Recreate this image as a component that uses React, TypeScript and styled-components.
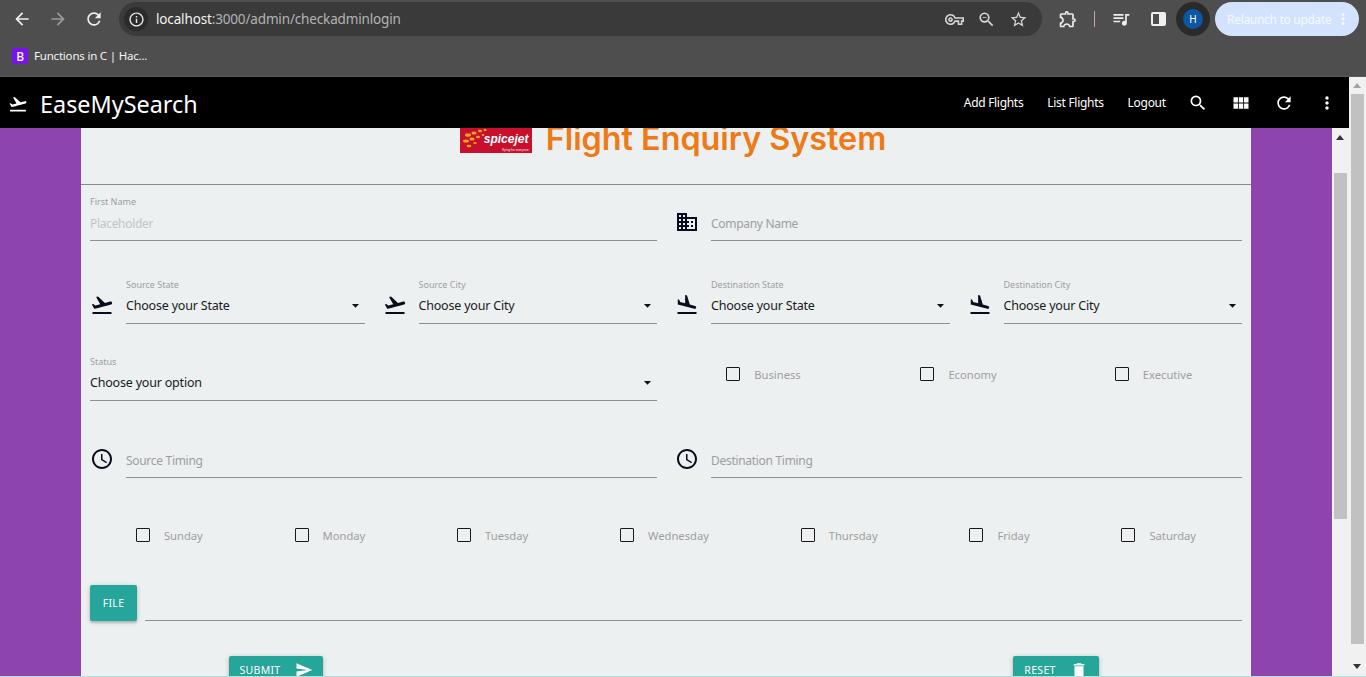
import React from 'react'
import styled, { createGlobalStyle } from 'styled-components'
import {
  MdAccessTime,
  MdArrowBack,
  MdArrowDropDown,
  MdArrowForward,
  MdBusiness,
  MdDelete,
  MdFlightLand,
  MdFlightTakeoff,
  MdInfoOutline,
  MdMoreVert,
  MdOutlineExtension,
  MdOutlineVpnKey,
  MdQueueMusic,
  MdRefresh,
  MdSearch,
  MdSend,
  MdStarBorder,
  MdViewModule,
  MdZoomOut,
} from 'react-icons/md'

const GlobalStyle = createGlobalStyle`
  html, body {
    margin: 0;
    padding: 0;
    overflow: hidden;
    background: #8e44ad;
    font-family: "Noto Sans", "Open Sans", sans-serif;
  }
  * { box-sizing: border-box; }
`

const Root = styled.div`
  width: 1366px;
  height: 677px;
  display: flex;
  flex-direction: column;
  overflow: hidden;
`

/* browser chrome */
const Chrome = styled.header`
  height: 77px;
  flex: none;
  background: #4e4e4e;
  border-bottom: 1px solid #5c5c5c;
  color: #e8e8e8;
`

const Toolbar = styled.div`
  height: 38px;
  display: flex;
  align-items: center;
  padding: 0 4px 0 12px;
`

const NavButton = styled.span<{ $dim?: boolean }>`
  width: 20px;
  display: flex;
  margin-right: 16px;
  font-size: 20px;
  color: ${p => (p.$dim ? '#9a9a9a' : '#f0f0f0')};
`

const Omnibox = styled.div`
  width: 923px;
  height: 34px;
  margin-left: -1px;
  border-radius: 17px;
  background: #3a3a3a;
  display: flex;
  align-items: center;
  padding: 0 14px 0 5px;
`

const SiteInfo = styled.span`
  width: 24px;
  height: 24px;
  border-radius: 50%;
  background: #2b2b2b;
  display: flex;
  align-items: center;
  justify-content: center;
  font-size: 17px;
  margin-right: 8px;
`

const Url = styled.span`
  flex: 1;
  font-size: 13.5px;
  letter-spacing: -0.15px;
  color: #b4b4b4;
  b {
    font-weight: 400;
    color: #f2f2f2;
  }
`

const OmniIcon = styled.span`
  display: flex;
  font-size: 19px;
  margin-left: 13px;
  color: #d6d6d6;
`

const ToolIcon = styled.span<{ $w: number }>`
  display: flex;
  justify-content: center;
  width: ${p => p.$w}px;
  font-size: 20px;
  color: #ededed;
`

const Divider = styled.span`
  width: 1px;
  height: 16px;
  background: #c9a3a8;
`

const SidePanel = styled.span`
  width: 15px;
  height: 14px;
  border: 2px solid #f0f0f0;
  border-radius: 2px;
  background: linear-gradient(90deg, transparent 50%, #f0f0f0 50%);
`

const AvatarRing = styled.span`
  width: 34px;
  height: 34px;
  border-radius: 50%;
  background: #2a2a2a;
  display: flex;
  align-items: center;
  justify-content: center;
`

const Avatar = styled.span`
  width: 20px;
  height: 20px;
  border-radius: 50%;
  background: #0b57a4;
  color: #fff;
  font-size: 10px;
  display: flex;
  align-items: center;
  justify-content: center;
`

const Relaunch = styled.span`
  width: 144px;
  height: 34px;
  margin-left: 5px;
  border-radius: 17px;
  background: #d3e3fd;
  color: #f6f9ff;
  font-size: 12px;
  letter-spacing: -0.3px;
  white-space: nowrap;
  display: flex;
  align-items: center;
  justify-content: space-between;
  padding: 0 7px 0 12px;
  svg { font-size: 18px; }
`

const Bookmarks = styled.div`
  height: 36px;
  display: flex;
  align-items: center;
  padding: 0 0 0 12px;
  font-size: 11.5px;
  letter-spacing: -0.2px;
  color: #f4f4f4;
`

const BookmarkName = styled.span`
  margin-top: -2px;
`

const Favicon = styled.span`
  width: 16px;
  height: 16px;
  border-radius: 3px;
  background: #7a11f0;
  color: #fff;
  font-size: 12px;
  font-weight: 500;
  display: flex;
  align-items: center;
  justify-content: center;
  margin-right: 6px;
`

/* page */
const Viewport = styled.div`
  flex: 1;
  min-height: 0;
  display: flex;
`

const Page = styled.div`
  flex: 1;
  display: flex;
  flex-direction: column;
  min-width: 0;
`

const Navbar = styled.nav`
  height: 51px;
  flex: none;
  background: #000;
  color: #fff;
  display: flex;
  align-items: center;
  padding-left: 8px;
`

const Brand = styled.span`
  display: flex;
  align-items: center;
  flex: 1;
  padding-top: 2px;
  font-size: 23.4px;
  svg {
    font-size: 20px;
    margin-right: 12px;
  }
`

const NavLink = styled.a`
  font-size: 12px;
  letter-spacing: -0.3px;
  padding: 0 12px;
  &:last-of-type { margin-right: -1.5px; }
`

const NavIcon = styled.span`
  width: 43.2px;
  display: flex;
  justify-content: center;
  font-size: 20px;
`

const Body = styled.div`
  flex: 1;
  min-height: 0;
  display: flex;
  background: #8e44ad;
`

const Card = styled.main`
  width: 1170px;
  margin: 0 81px;
  flex: none;
  background: #ecf0f1;
  overflow: hidden;
`

const TitleRow = styled.div`
  height: 57px;
  overflow: hidden;
  display: flex;
  align-items: flex-end;
  justify-content: center;
  gap: 14px;
  padding: 0 0 27px 14px;
  border-bottom: 1px solid #8a8a8a;
`

const Logo = styled.div`
  position: relative;
  flex: none;
  width: 72px;
  height: 36px;
  margin-bottom: 4px;
  background: #c8102e;
  color: #fff;
  overflow: hidden;
`

const LogoDots = styled.svg`
  position: absolute;
  left: 2px;
  top: 9px;
`

const LogoName = styled.span`
  position: absolute;
  left: 24px;
  top: 15px;
  font-family: "Liberation Sans", sans-serif;
  font-size: 12px;
  font-style: italic;
  font-weight: 700;
`

const LogoTag = styled.span`
  position: absolute;
  right: 3px;
  bottom: 1px;
  font-size: 3px;
`

const Title = styled.h1`
  margin: 0;
  flex: none;
  font-family: Inter, sans-serif;
  font-size: 32.3px;
  line-height: 36px;
  font-weight: 600;
  color: #ee7a16;
`

const FormRow = styled.div<{ $h: number }>`
  height: ${p => p.$h}px;
  display: flex;
`

const Half = styled.div`
  width: 585px;
  flex: none;
  padding: 0 9px;
  display: flex;
`

const Quarter = styled.div`
  width: 292.5px;
  flex: none;
  padding: 0 9px;
  display: flex;
`

const IconBox = styled.span<{ $top: number }>`
  flex: none;
  width: 24px;
  margin-right: 12px;
  padding-top: ${p => p.$top}px;
  font-size: 24px;
  color: #0b0b1e;
  svg { display: block; }
`

const Field = styled.div`
  flex: 1;
  min-width: 0;
  display: flex;
  flex-direction: column;
  justify-content: flex-end;
`

const FieldLabel = styled.label`
  font-size: 9px;
  line-height: 12px;
  color: #9e9e9e;
`

const InputLine = styled.div<{ $tone?: string }>`
  height: 33px;
  flex: none;
  display: flex;
  align-items: center;
  justify-content: space-between;
  padding-bottom: ${p => (p.$tone ? '2px' : '4px')};
  border-bottom: 1px solid #8f8f8f;
  font-size: ${p => (p.$tone ? '12px' : '12.5px')};
  letter-spacing: ${p => (p.$tone ? '-0.3px' : '-0.2px')};
  color: ${p => p.$tone ?? '#1a1a1a'};
  svg {
    font-size: 17px;
    margin-right: 1px;
    color: #111;
  }
`

const CheckGroup = styled.div`
  width: 585px;
  flex: none;
  display: flex;
  padding-top: 43px;
`

const CheckCell = styled.div`
  flex: 1;
  display: flex;
  justify-content: center;
`

const CheckItem = styled.label`
  display: flex;
  align-items: center;
  gap: 14px;
  height: 14px;
  font-size: 11.2px;
  color: #9e9e9e;
`

const Box = styled.span`
  width: 14px;
  height: 14px;
  border: 1.5px solid #1a1a1a;
  border-radius: 1px;
  flex: none;
`

const DaysRow = styled.div`
  height: 14px;
  margin: 50px 0 43px;
  padding: 0 9px;
  display: flex;
  justify-content: space-around;
`

const FileRow = styled.div`
  height: 36px;
  padding: 0 9px;
  display: flex;
  gap: 8px;
`

const TealButton = styled.button`
  border: 0;
  padding: 0;
  border-radius: 2px;
  background: #26a69a;
  color: #fff;
  font-family: inherit;
  font-size: 10.5px;
  letter-spacing: 0.3px;
  box-shadow: 0 2px 2px rgba(0, 0, 0, 0.14), 0 1px 5px rgba(0, 0, 0, 0.2);
  display: flex;
  align-items: center;
  justify-content: center;
  svg { font-size: 18px; }
`

const FileButton = styled(TealButton)`
  width: 47px;
  height: 36px;
`

const FilePath = styled.div`
  flex: 1;
  border-bottom: 1px solid #8f8f8f;
`

const Actions = styled.div`
  padding: 35px 152px 0 148px;
  display: flex;
  justify-content: space-between;
`

const ActionButton = styled(TealButton)<{ $w: number }>`
  width: ${p => p.$w}px;
  height: 28px;
  gap: 14px;
`

const Scrollbar = styled.div<{ $thumbTop: number; $thumbH: number }>`
  width: 17px;
  flex: none;
  background: #f1f1f1;
  position: relative;
  &::after {
    content: '';
    position: absolute;
    left: 2px;
    width: 13px;
    top: ${p => p.$thumbTop}px;
    height: ${p => p.$thumbH}px;
    background: #c1c1c1;
  }
`

const Arrow = styled.i<{ $up?: boolean; $dark?: boolean; $y: number }>`
  position: absolute;
  left: 4px;
  top: ${p => p.$y}px;
  border-left: 4.5px solid transparent;
  border-right: 4.5px solid transparent;
  ${p => (p.$up ? 'border-bottom' : 'border-top')}: 5px solid ${p => (p.$dark ? '#333' : '#a3a3a3')};
`

const BottomEdge = styled.div`
  height: 1px;
  flex: none;
  background: #b5e0dc;
`

const sourceFields = [
  ['Source State', 'Choose your State'],
  ['Source City', 'Choose your City'],
]
const destFields = [
  ['Destination State', 'Choose your State'],
  ['Destination City', 'Choose your City'],
]
const classes = ['Business', 'Economy', 'Executive']
const days = ['Sunday', 'Monday', 'Tuesday', 'Wednesday', 'Thursday', 'Friday', 'Saturday']

const SelectField = ({ label, value }: { label: string; value: string }) => (
  <Field>
    <FieldLabel>{label}</FieldLabel>
    <InputLine>
      {value}
      <MdArrowDropDown />
    </InputLine>
  </Field>
)

const SpiceLogo = () => (
  <Logo>
    <LogoDots width="30" height="26" viewBox="0 0 30 26">
      <g fill="#f5a623">
        <ellipse cx="6" cy="9" rx="3" ry="1.8" />
        <ellipse cx="12" cy="7" rx="2.6" ry="1.6" />
        <ellipse cx="18" cy="5" rx="2" ry="1.3" />
        <ellipse cx="23" cy="4" rx="1.5" ry="1" />
        <ellipse cx="4" cy="15" rx="3" ry="1.6" />
        <ellipse cx="10" cy="13" rx="2.6" ry="1.5" />
        <ellipse cx="16" cy="11" rx="2" ry="1.2" />
        <ellipse cx="21" cy="9" rx="1.3" ry="1" />
        <ellipse cx="7" cy="20" rx="2.4" ry="1.3" />
        <ellipse cx="13" cy="17" rx="1.8" ry="1" />
      </g>
    </LogoDots>
    <LogoName>spicejet</LogoName>
    <LogoTag>flying for everyone</LogoTag>
  </Logo>
)

export default function App() {
  return (
    <Root>
      <GlobalStyle />
      <Chrome>
        <Toolbar>
          <NavButton><MdArrowBack /></NavButton>
          <NavButton $dim><MdArrowForward /></NavButton>
          <NavButton><MdRefresh /></NavButton>
          <Omnibox>
            <SiteInfo><MdInfoOutline /></SiteInfo>
            <Url><b>localhost</b>:3000/admin/checkadminlogin</Url>
            <OmniIcon><MdOutlineVpnKey /></OmniIcon>
            <OmniIcon><MdZoomOut /></OmniIcon>
            <OmniIcon><MdStarBorder /></OmniIcon>
          </Omnibox>
          <ToolIcon $w={52}><MdOutlineExtension /></ToolIcon>
          <Divider />
          <ToolIcon $w={52}><MdQueueMusic /></ToolIcon>
          <ToolIcon $w={22}><SidePanel /></ToolIcon>
          <ToolIcon $w={7} />
          <AvatarRing><Avatar>H</Avatar></AvatarRing>
          <Relaunch>Relaunch to update<MdMoreVert /></Relaunch>
        </Toolbar>
        <Bookmarks>
          <Favicon>B</Favicon>
          <BookmarkName>Functions in C | Hac...</BookmarkName>
        </Bookmarks>
      </Chrome>
      <Viewport>
        <Page>
          <Navbar>
            <Brand><MdFlightTakeoff />EaseMySearch</Brand>
            <NavLink>Add Flights</NavLink>
            <NavLink>List Flights</NavLink>
            <NavLink>Logout</NavLink>
            <NavIcon><MdSearch /></NavIcon>
            <NavIcon><MdViewModule /></NavIcon>
            <NavIcon><MdRefresh /></NavIcon>
            <NavIcon><MdMoreVert /></NavIcon>
          </Navbar>
          <Body>
            <Card>
              <TitleRow>
                <SpiceLogo />
                <Title>Flight Enquiry System</Title>
              </TitleRow>
              <FormRow $h={56}>
                <Half>
                  <Field>
                    <FieldLabel>First Name</FieldLabel>
                    <InputLine $tone="#c4c4c4">Placeholder</InputLine>
                  </Field>
                </Half>
                <Half>
                  <IconBox $top={25}><MdBusiness /></IconBox>
                  <Field>
                    <InputLine $tone="#9e9e9e">Company Name</InputLine>
                  </Field>
                </Half>
              </FormRow>
              <FormRow $h={83}>
                {sourceFields.map(([label, value]) => (
                  <Quarter key={label}>
                    <IconBox $top={52}><MdFlightTakeoff /></IconBox>
                    <SelectField label={label} value={value} />
                  </Quarter>
                ))}
                {destFields.map(([label, value]) => (
                  <Quarter key={label}>
                    <IconBox $top={52}><MdFlightLand /></IconBox>
                    <SelectField label={label} value={value} />
                  </Quarter>
                ))}
              </FormRow>
              <FormRow $h={77}>
                <Half>
                  <SelectField label="Status" value="Choose your option" />
                </Half>
                <CheckGroup>
                  {classes.map(c => (
                    <CheckCell key={c}>
                      <CheckItem><Box />{c}</CheckItem>
                    </CheckCell>
                  ))}
                </CheckGroup>
              </FormRow>
              <FormRow $h={77}>
                <Half>
                  <IconBox $top={46}><MdAccessTime /></IconBox>
                  <Field><InputLine $tone="#9e9e9e">Source Timing</InputLine></Field>
                </Half>
                <Half>
                  <IconBox $top={46}><MdAccessTime /></IconBox>
                  <Field><InputLine $tone="#9e9e9e">Destination Timing</InputLine></Field>
                </Half>
              </FormRow>
              <DaysRow>
                {days.map(d => (
                  <CheckItem key={d}><Box />{d}</CheckItem>
                ))}
              </DaysRow>
              <FileRow>
                <FileButton>FILE</FileButton>
                <FilePath />
              </FileRow>
              <Actions>
                <ActionButton $w={94}>SUBMIT<MdSend /></ActionButton>
                <ActionButton $w={86}>RESET<MdDelete /></ActionButton>
              </Actions>
            </Card>
            <Scrollbar $thumbTop={45} $thumbH={346}>
              <Arrow $up $dark $y={7} />
            </Scrollbar>
          </Body>
        </Page>
        <Scrollbar $thumbTop={17} $thumbH={550}>
          <Arrow $up $y={6} />
          <Arrow $dark $y={587} />
        </Scrollbar>
      </Viewport>
      <BottomEdge />
    </Root>
  )
}
